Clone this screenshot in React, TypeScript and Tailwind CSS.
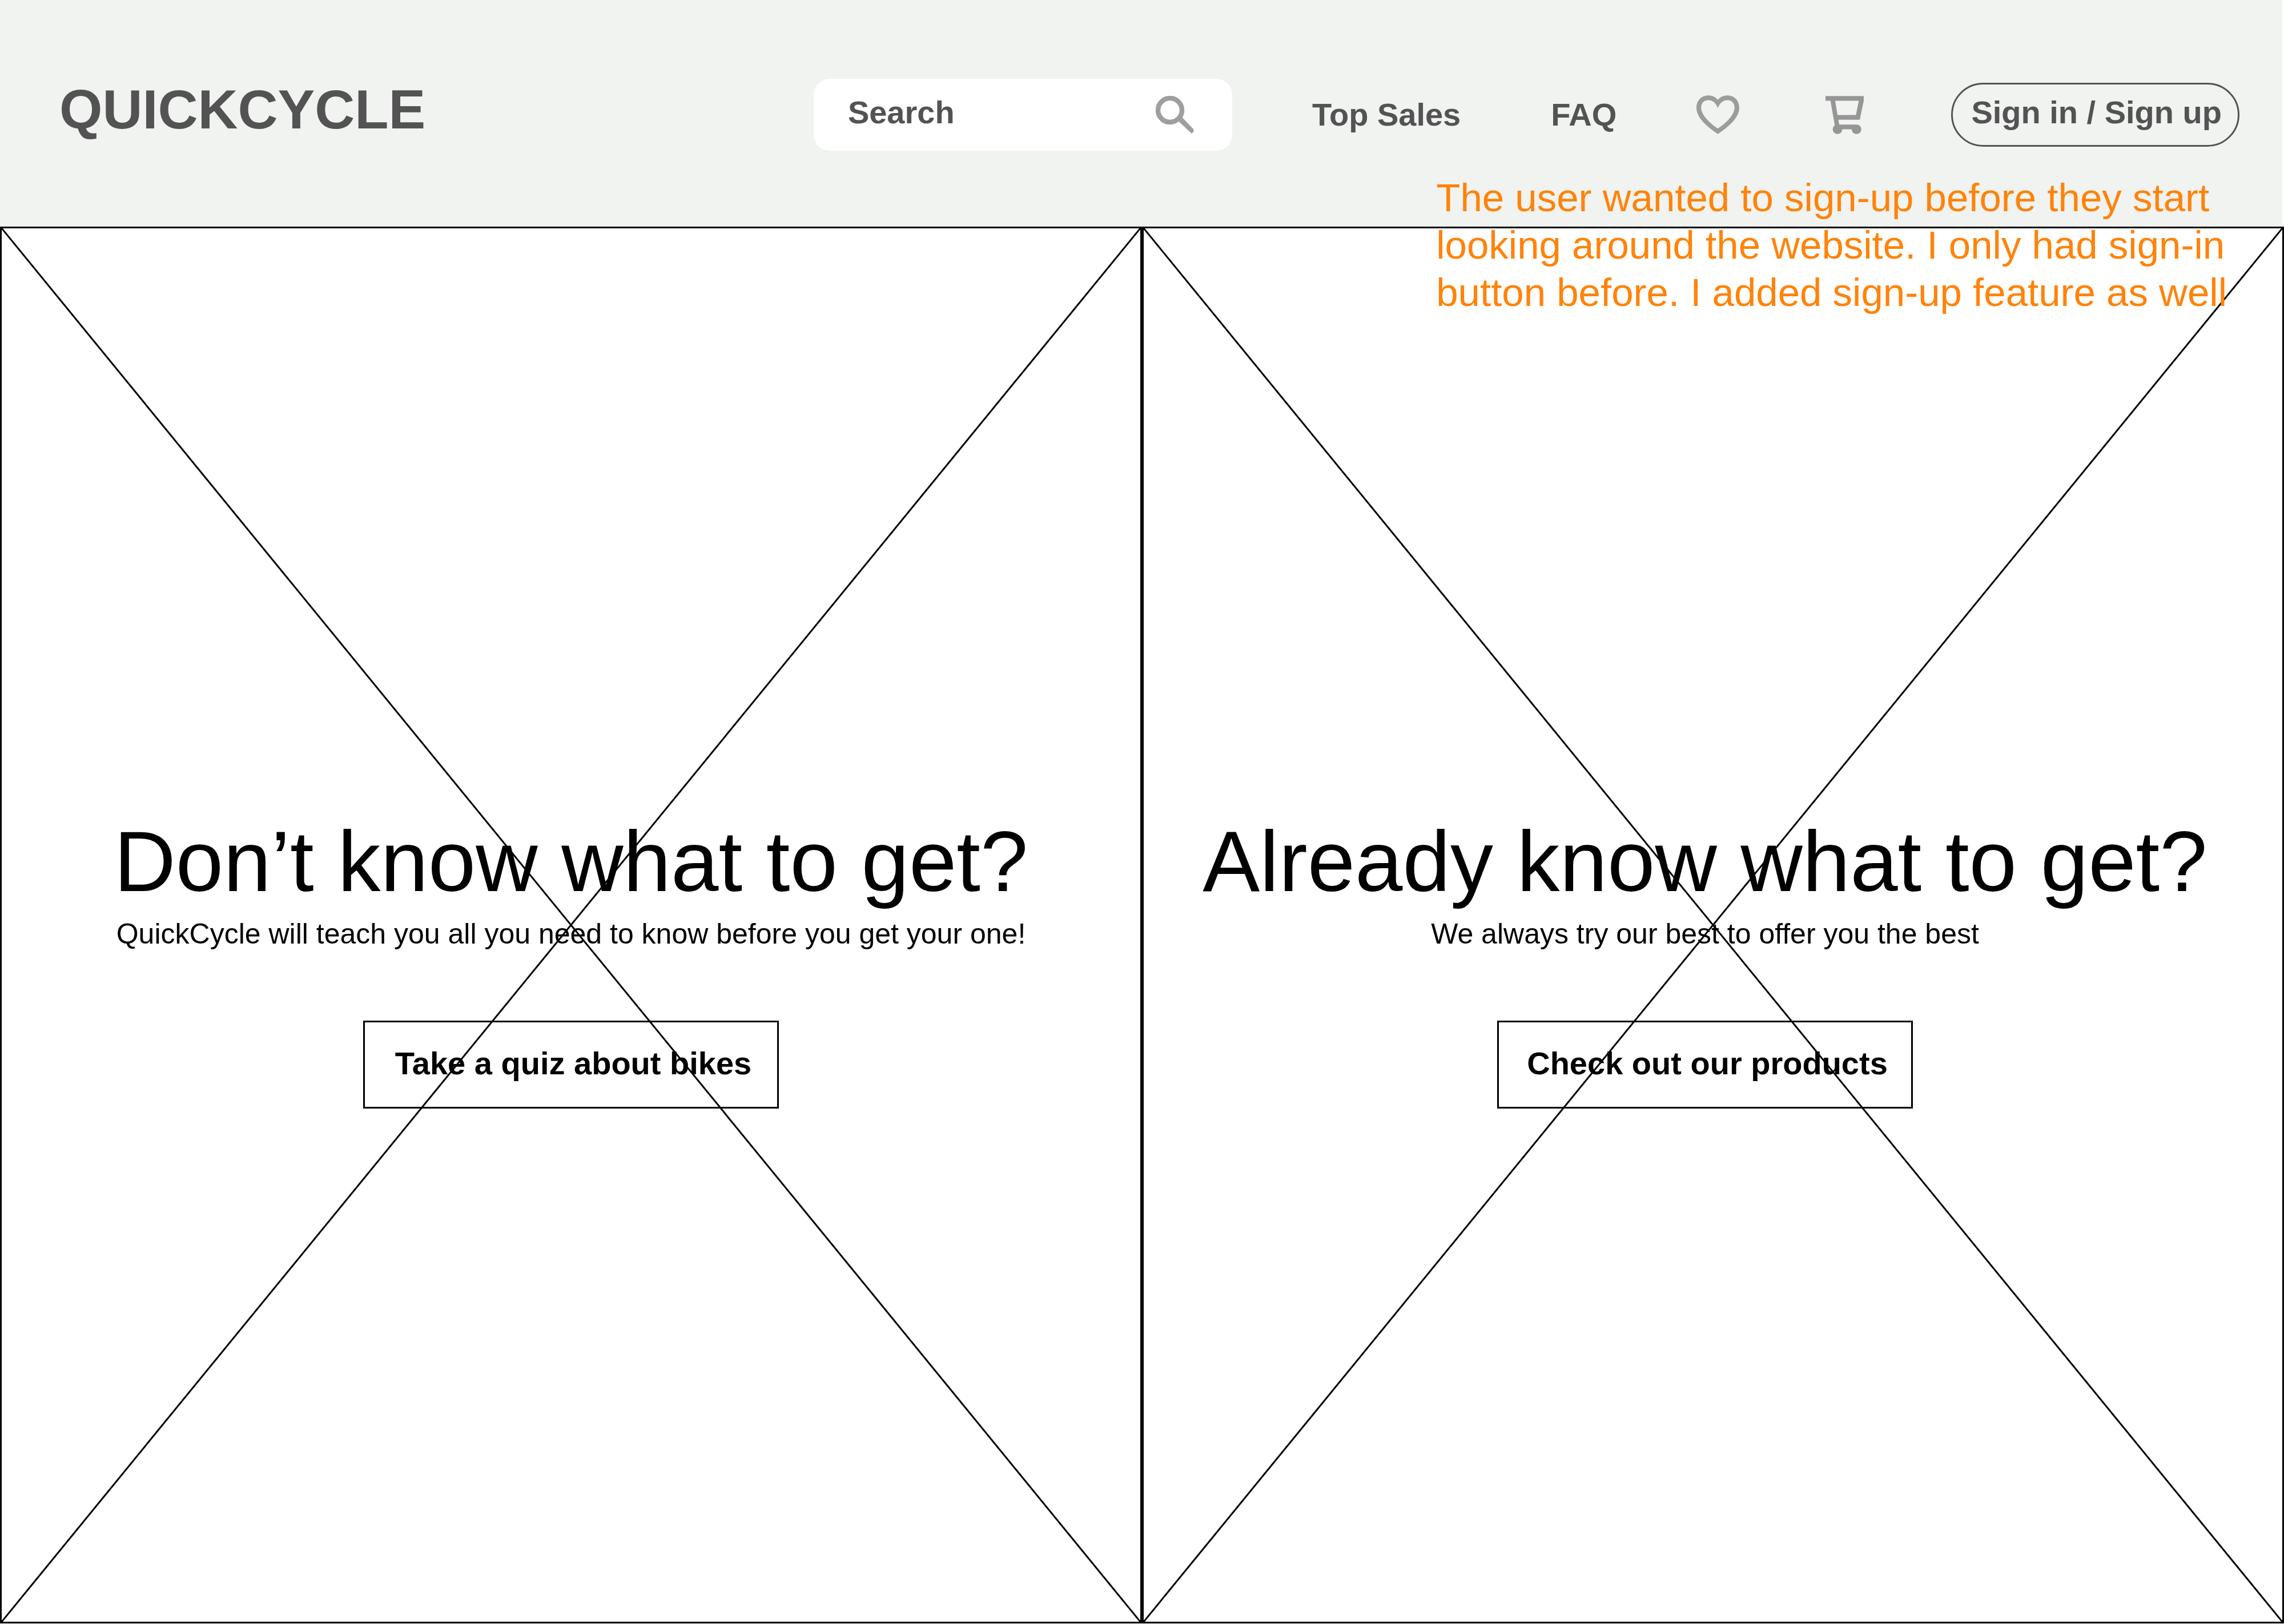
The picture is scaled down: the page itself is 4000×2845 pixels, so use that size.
import React from "react";

function SearchIcon() {
  return (
    <svg viewBox="0 0 67 67" className="size-[67px] shrink-0" aria-hidden="true">
      <circle cx="25" cy="25" r="21" fill="none" stroke="#9f9f9f" strokeWidth="8.5" />
      <path d="M46 37.500 L65 57 Q68 60.500 66 63 L63 66 L40 44.500 Z" fill="#9f9f9f" />
    </svg>
  );
}

function HeartIcon() {
  return (
    <svg viewBox="92 83 226 203" className="h-[68px] w-[75px]" aria-hidden="true">
      <path
        fill="#9b9d9b"
        fillRule="evenodd"
        d="M205 286 C150 250 92 200 92 148 C92 110 118 83 154 83 C175 83 193 91 205 106 C217 91 235 83 256 83 C292 83 318 110 318 148 C318 200 260 250 205 286Z M205 150 C196 125 180 108 154 108 C130 108 117 125 117 147 C117 185 160 228 205 257 C250 228 293 185 293 147 C293 125 280 108 256 108 C230 108 214 125 205 150Z"
      />
    </svg>
  );
}

function CartIcon() {
  return (
    <svg viewBox="771 80 201 200" className="size-[67px]" aria-hidden="true">
      <g fill="#969696">
        <path
          fillRule="evenodd"
          d="M771 80 H972 V105 L951 205 H839 L843 230 H935 V255 H834 L820 235 L797 105 H771Z M822 105 L834 180 H931 L946 105Z"
        />
        <circle cx="834" cy="255" r="25" />
        <circle cx="934" cy="255" r="25" />
      </g>
    </svg>
  );
}

function Header() {
  return (
    <header className="flex items-center border-r-[3px] border-white bg-[#f0f3f0] pt-[138px] pr-[75px] pb-[133px] pl-[104px] text-[56px] leading-[64px] font-bold text-[#535353]">
      <a href="#" className="pb-5 text-[97px] leading-[97px]">
        QUICKCYCLE
      </a>
      <form
        role="search"
        className="ml-auto flex h-[126px] w-[733px] items-center rounded-[28px] bg-white pr-[67px] pl-[60px]"
      >
        <input
          type="search"
          aria-label="Search"
          placeholder="Search"
          className="min-w-0 flex-1 bg-transparent pb-2 outline-none placeholder:text-[#535353] placeholder:opacity-100"
        />
        <button type="submit" aria-label="Submit search">
          <SearchIcon />
        </button>
      </form>
      <nav className="ml-[140px] flex items-center">
        <a href="#top-sales">Top Sales</a>
        <a href="#faq" className="ml-[158px]">
          FAQ
        </a>
        <a href="#favourites" aria-label="Favourites" className="ml-[140px]">
          <HeartIcon />
        </a>
        <a href="#cart" aria-label="Cart" className="ml-[151px]">
          <CartIcon />
        </a>
      </nav>
      <button
        type="button"
        className="ml-[153px] h-[112px] rounded-full border-[3px] border-[#535353] pr-7 pb-2 pl-8 whitespace-nowrap"
      >
        Sign in / Sign up
      </button>
    </header>
  );
}

type PanelProps = {
  title: string;
  text: string;
  action: string;
  className?: string;
};

function Panel({ title, text, action, className = "" }: PanelProps) {
  return (
    <section
      className={`relative flex flex-col items-center justify-center border-[3px] border-black pt-[135px] ${className}`}
    >
      <svg className="absolute inset-0 size-full" aria-hidden="true">
        <line x1="0" y1="0" x2="100%" y2="100%" stroke="#000" strokeWidth="3" />
        <line x1="100%" y1="0" x2="0" y2="100%" stroke="#000" strokeWidth="3" />
      </svg>
      <h2 className="mb-6 text-[150px] leading-[150px] whitespace-nowrap">{title}</h2>
      <p className="mb-[124px] text-[50px] leading-[56px]">{text}</p>
      <button
        type="button"
        className="h-[154px] w-[728px] border-[3px] border-black pb-1 pl-2 text-[56px] leading-[64px] font-bold"
      >
        {action}
      </button>
    </section>
  );
}

export default function App() {
  return (
    <div className="relative flex min-h-screen flex-col bg-white pb-px font-['Liberation_Sans',Arial,sans-serif] text-black">
      <Header />
      <main className="grid flex-1 grid-cols-2">
        <Panel
          title="Don’t know what to get?"
          text="QuickCycle will teach you all you need to know before you get your one!"
          action="Take a quiz about bikes"
        />
        <Panel
          title="Already know what to get?"
          text="We always try our best to offer you the best"
          action="Check out our products"
          className="pr-[28px]"
        />
      </main>
      <aside className="absolute top-[305px] right-[100px] text-[69px] leading-[83px] whitespace-nowrap text-[#ff830a]">
        The user wanted to sign-up before they start
        <br />
        looking around the website. I only had sign-in
        <br />
        button before. I added sign-up feature as well
      </aside>
    </div>
  );
}
